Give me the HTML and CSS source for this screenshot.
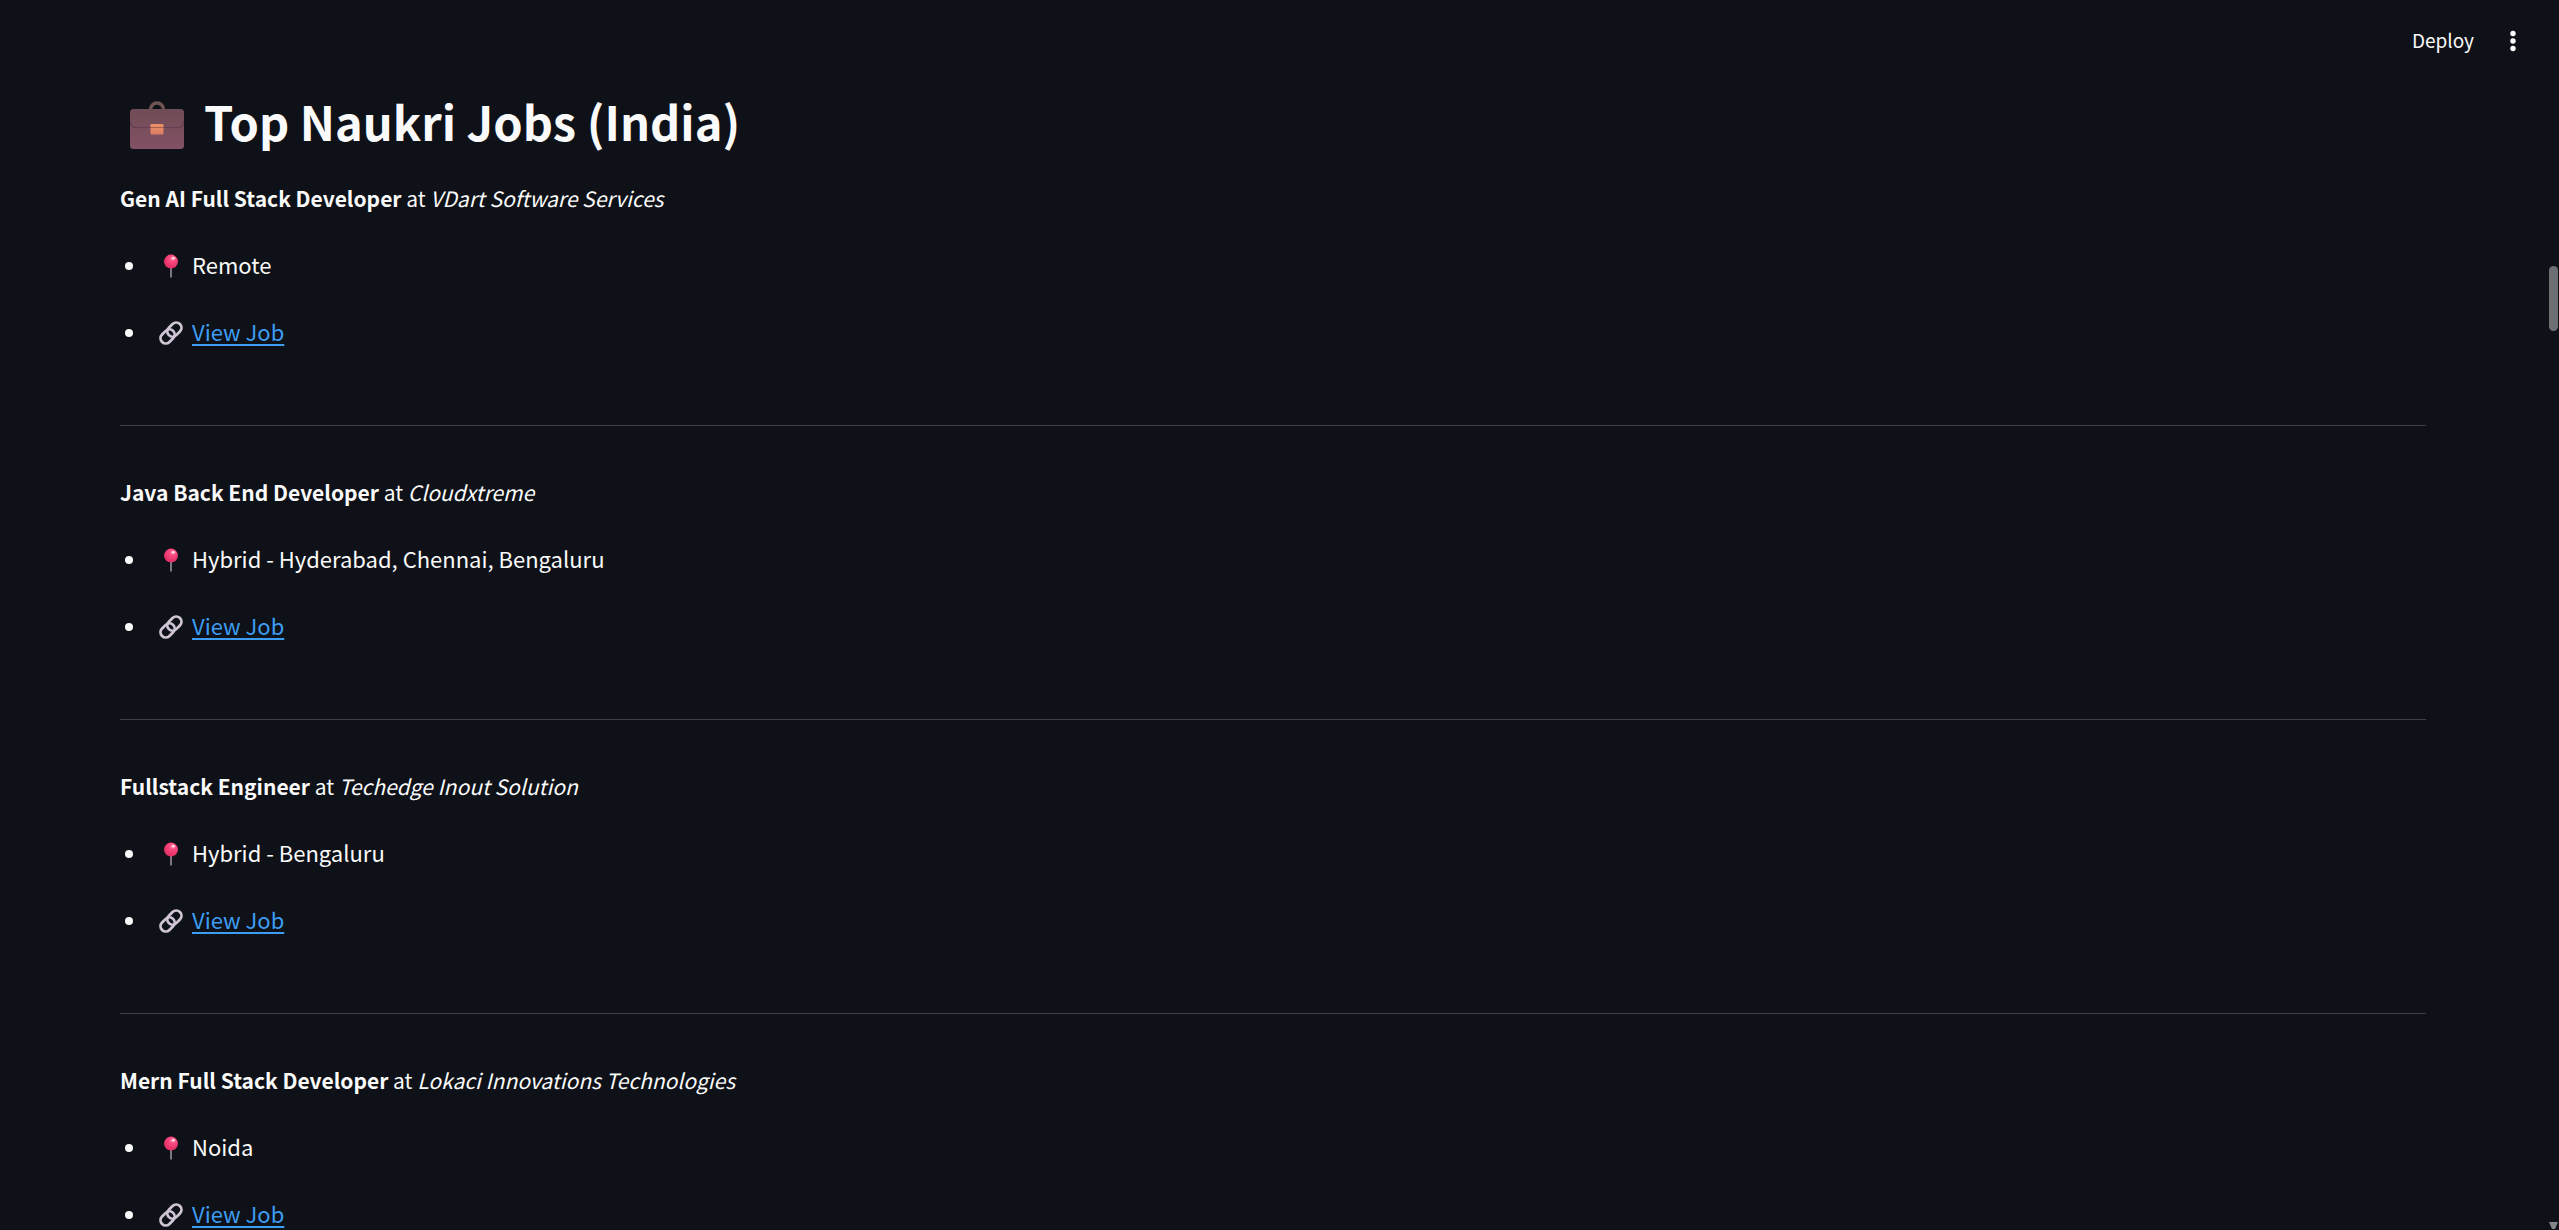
FILE: index.html
```html
<!DOCTYPE html>
<html lang="en">
<head>
<meta charset="utf-8">
<meta name="viewport" content="width=device-width, initial-scale=1">
<title>Top Naukri Jobs (India)</title>
<link rel="stylesheet" href="styles.css">
</head>
<body>
<svg width="0" height="0" class="sprite" aria-hidden="true">
  <defs>
    <radialGradient id="pin-head" cx="0.62" cy="0.28" r="0.75">
      <stop offset="0" stop-color="#ff8fb0"/><stop offset="0.3" stop-color="#fb4a80"/><stop offset="1" stop-color="#dc2a62"/>
    </radialGradient>
    <symbol id="pin" viewBox="0 0 24 24">
      <path d="M12 13V23.5" stroke="#a39aa8" stroke-width="1.5"/>
      <circle cx="12" cy="7.6" r="7" fill="url(#pin-head)"/>
      <ellipse cx="14.4" cy="4.2" rx="1.8" ry="1.3" fill="#ffd3e0"/>
    </symbol>
    <symbol id="chain" viewBox="0 0 24 24">
      <g fill="none" stroke="#cfc5d4" stroke-width="2.8">
        <rect x="-7.8" y="-5.2" width="15.6" height="10.4" rx="5.2" transform="translate(15.4 8.6) rotate(-45)"/>
        <rect x="-7.8" y="-5.2" width="15.6" height="10.4" rx="5.2" transform="translate(8.6 15.4) rotate(-45)"/>
      </g>
    </symbol>
  </defs>
</svg>

<header class="toolbar">
  <button class="deploy" type="button">Deploy</button>
  <button class="menu" type="button" aria-label="Main menu">
    <svg width="24" height="24" viewBox="0 0 24 24" fill="#fafafa" aria-hidden="true"><circle cx="12" cy="4.5" r="2.7"/><circle cx="12" cy="12" r="2.7"/><circle cx="12" cy="19.5" r="2.7"/></svg>
  </button>
</header>

<main class="content">
  <h1 class="heading">
    <svg class="briefcase" width="54" height="50" viewBox="0 0 54 50" aria-hidden="true">
      <defs>
        <linearGradient id="case-body" x1="0" y1="0" x2="0" y2="1"><stop offset="0" stop-color="#704d56"/><stop offset="1" stop-color="#835064"/></linearGradient>
        <linearGradient id="case-clasp" x1="0" y1="0" x2="0" y2="1"><stop offset="0" stop-color="#ed9464"/><stop offset="1" stop-color="#d97c65"/></linearGradient>
      </defs>
      <path d="M20.500 11V9.500a6.500 6.500 0 0 1 13 0V11" fill="none" stroke="#6f5552" stroke-width="3.500"/>
      <rect x="0" y="9" width="54" height="40" rx="3.500" fill="url(#case-body)"/>
      <path d="M0 21.500q1 6 6 6h42q5 0 6-6" fill="none" stroke="#633d50" stroke-width="1.200"/>
      <rect x="20.500" y="24" width="13" height="10.500" rx="1" fill="url(#case-clasp)"/>
      <path d="M20.500 27.500h13" stroke="#a85c4c" stroke-width="1"/>
    </svg>
    <span>Top Naukri Jobs (India)</span>
  </h1>

  <article class="job">
    <p class="title"><strong>Gen AI Full Stack Developer</strong> at <em>VDart Software Services</em></p>
    <ul class="facts">
      <li><svg class="icon" aria-hidden="true"><use href="#pin"/></svg>Remote</li>
      <li><svg class="icon" aria-hidden="true"><use href="#chain"/></svg><a href="#">View Job</a></li>
    </ul>
  </article>
  <hr>
  <article class="job">
    <p class="title"><strong>Java Back End Developer</strong> at <em>Cloudxtreme</em></p>
    <ul class="facts">
      <li><svg class="icon" aria-hidden="true"><use href="#pin"/></svg>Hybrid - Hyderabad, Chennai, Bengaluru</li>
      <li><svg class="icon" aria-hidden="true"><use href="#chain"/></svg><a href="#">View Job</a></li>
    </ul>
  </article>
  <hr>
  <article class="job">
    <p class="title"><strong>Fullstack Engineer</strong> at <em>Techedge Inout Solution</em></p>
    <ul class="facts">
      <li><svg class="icon" aria-hidden="true"><use href="#pin"/></svg>Hybrid - Bengaluru</li>
      <li><svg class="icon" aria-hidden="true"><use href="#chain"/></svg><a href="#">View Job</a></li>
    </ul>
  </article>
  <hr>
  <article class="job">
    <p class="title"><strong>Mern Full Stack Developer</strong> at <em>Lokaci Innovations Technologies</em></p>
    <ul class="facts">
      <li><svg class="icon" aria-hidden="true"><use href="#pin"/></svg>Noida</li>
      <li><svg class="icon" aria-hidden="true"><use href="#chain"/></svg><a href="#">View Job</a></li>
    </ul>
  </article>
</main>

<div class="scroll-thumb" aria-hidden="true"></div>
<svg class="scroll-arrow" width="9" height="8" viewBox="0 0 9 8" aria-hidden="true"><path d="M0 0h9L6 7H3z" fill="#85868a"/></svg>
</body>
</html>
```
FILE: styles.css
```css
* {
  box-sizing: border-box;
}

body {
  margin: 0;
  height: 100vh;
  overflow: hidden;
  background: #0e1117;
  color: #fafafa;
  font-family: "Source Sans Pro", "Noto Sans CJK SC", sans-serif;
  font-size: 22px;
  line-height: 38px;
}

.sprite {
  position: absolute;
}

.toolbar {
  display: flex;
  justify-content: flex-end;
  align-items: center;
  gap: 27px;
  height: 82px;
  padding-right: 34px;
}

button {
  padding: 0;
  border: 0;
  background: none;
  color: inherit;
  font: inherit;
}

.deploy {
  padding-bottom: 3px;
  font-size: 19px;
}

.menu {
  display: flex;
}

.content {
  padding: 0 133px 0 120px;
}

.heading {
  display: flex;
  align-items: center;
  gap: 20px;
  height: 78px;
  margin: 0 0 19px;
  padding-left: 10px;
  font-size: 47px;
  font-weight: 700;
  line-height: 78px;
}

.briefcase {
  margin-top: 8px;
}

.title {
  margin: 0 0 28px;
  font-size: 21px;
}

.title em {
  font-style: italic;
}

.facts {
  display: flex;
  flex-direction: column;
  gap: 29px;
  margin: 0;
  padding: 0;
  list-style: none;
}

.facts li {
  display: flex;
  align-items: center;
  padding-left: 5px;
}

.facts li::before {
  content: "";
  width: 8px;
  height: 8px;
  margin-top: 4px;
  margin-right: 26px;
  border-radius: 50%;
  background: #fafafa;
}

.icon {
  width: 24px;
  height: 24px;
  margin-top: 4px;
  margin-right: 9px;
}

a {
  color: #3d9df3;
  text-decoration: underline;
  text-decoration-thickness: 2px;
  text-underline-offset: 3px;
}

hr {
  height: 1px;
  margin: 75px 0 47px;
  border: 0;
  background: #3d4045;
}

.scroll-thumb {
  position: fixed;
  top: 266px;
  right: 1px;
  width: 9px;
  height: 65px;
  border-radius: 5px;
  background: #6e6f73;
}

.scroll-arrow {
  position: fixed;
  right: 1px;
  bottom: 0;
}
```
